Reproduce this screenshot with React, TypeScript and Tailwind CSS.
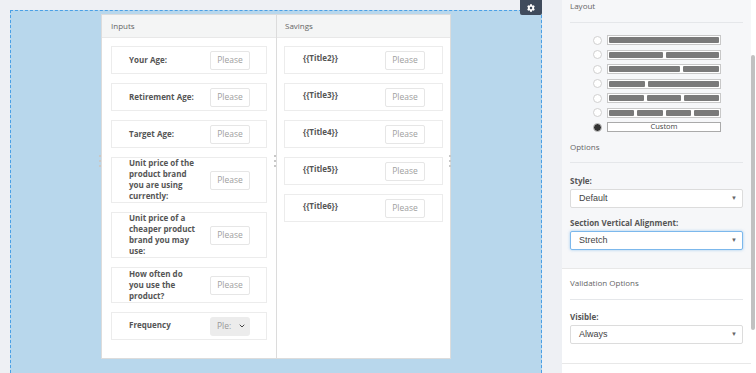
import { FaCog } from 'react-icons/fa';
import { ChevronDown } from 'lucide-react';

const inputRows = [
  { label: 'Your Age:', h: 'h-[28px]' },
  { label: 'Retirement Age:', h: 'h-[28px]' },
  { label: 'Target Age:', h: 'h-[28px]' },
  { label: 'Unit price of the product brand you are using currently:', h: 'h-[46px]' },
  { label: 'Unit price of a cheaper product brand you may use:', h: 'h-[46px]' },
  { label: 'How often do you use the product?', h: 'h-[36px]' },
];

const savingsRows = ['{{Title2}}', '{{Title3}}', '{{Title4}}', '{{Title5}}', '{{Title6}}'];

const layouts = [
  ['flex-1'],
  ['flex-1', 'flex-1'],
  ['flex-[2]', 'flex-1'],
  ['flex-1', 'flex-[2]'],
  ['flex-1', 'flex-1', 'flex-1'],
  ['flex-1', 'flex-1', 'flex-1', 'flex-1'],
];

function PleaseInput() {
  return (
    <div className="w-[40px] h-[19px] shrink-0 border border-[#e6e6e6] rounded-[2px] bg-white flex items-center justify-center text-[8.5px] text-[#a0a0a0]">
      Please
    </div>
  );
}

function Handle() {
  return (
    <div className="flex flex-col gap-[3px]">
      <span className="w-[2px] h-[2px] bg-[#c8c8c8]" />
      <span className="w-[2px] h-[2px] bg-[#c8c8c8]" />
      <span className="w-[2px] h-[2px] bg-[#c8c8c8]" />
    </div>
  );
}

function Select({ value, focused }: { value: string; focused?: boolean }) {
  return (
    <div
      className={
        'h-[19px] bg-white rounded-[2px] flex items-center justify-between pl-[8px] pr-[5px] text-[9px] text-[#444] font-["Liberation_Sans",sans-serif] ' +
        (focused ? 'border border-[#7cb8ec] shadow-[0_0_3px_rgba(102,175,233,0.6)]' : 'border border-[#dcdcdc]')
      }
    >
      <span>{value}</span>
      <span className="text-[6px] text-[#666]">▼</span>
    </div>
  );
}

export default function App() {
  return (
    <div className="w-[756px] h-[373px] overflow-hidden bg-[#eef0f4] flex font-['Open_Sans',sans-serif]">
      {/* canvas */}
      <div className="w-[542px] h-full pl-[10px] pt-[10px] relative shrink-0">
        <div className="h-full border border-dashed border-[#4aa0e6] border-b-0 bg-[#b8d7ec] pl-[90px] pt-[3px]">
          <div className="relative w-[350px] h-[345px] bg-white border border-[#dcdcdc] flex">
            <div className="w-[175px] border-r border-[#dcdcdc] flex flex-col">
              <div className="h-[23px] bg-[#f4f5f5] border-b border-[#e8e8e8] pl-[9px] flex items-center text-[8px] text-[#666]">
                Inputs
              </div>
              <div className="flex flex-col gap-[9px] px-[9px] pt-[8px]">
                {inputRows.map((r) => (
                  <div key={r.label} className={`${r.h} border border-[#ececec] flex items-center justify-between pl-[17px] pr-[16px]`}>
                    <span className="w-[68px] text-[8px] leading-[11px] font-bold text-[#555] pb-[2px]">{r.label}</span>
                    <PleaseInput />
                  </div>
                ))}
                <div className="h-[28px] border border-[#ececec] flex items-center justify-between pl-[17px] pr-[16px]">
                  <span className="text-[8px] leading-[11px] font-bold text-[#555] pb-[4px]">Frequency</span>
                  <div className="w-[40px] h-[19px] bg-[#ececec] rounded-[3px] flex items-center justify-between pl-[7px] pr-[4px] text-[8.5px] text-[#999]">
                    <span className="w-[17px] overflow-hidden whitespace-nowrap">Ple:</span>
                    <ChevronDown className="w-[8px] h-[8px] text-[#444]" strokeWidth={3} />
                  </div>
                </div>
              </div>
            </div>
            <div className="flex-1 flex flex-col">
              <div className="h-[23px] bg-[#f4f5f5] border-b border-[#e8e8e8] pl-[8px] flex items-center text-[8px] text-[#666]">
                Savings
              </div>
              <div className="flex flex-col gap-[9px] px-[7px] pt-[8px]">
                {savingsRows.map((t) => (
                  <div key={t} className="h-[28px] border border-[#ececec] flex items-center justify-between pl-[18px] pr-[17px]">
                    <span className="text-[8px] font-bold text-[#555] pb-[4px]">{t}</span>
                    <PleaseInput />
                  </div>
                ))}
              </div>
            </div>
            <div className="absolute left-[-3px] top-[140px]"><Handle /></div>
            <div className="absolute left-[172px] top-[140px]"><Handle /></div>
            <div className="absolute left-[347px] top-[140px]"><Handle /></div>
          </div>
        </div>
        <div className="absolute left-[520px] top-0 w-[22px] h-[15px] bg-[#3f4b5c] rounded-b-[2px] flex items-center justify-center">
          <FaCog className="w-[8px] h-[8px] text-white" />
        </div>
      </div>

      <div className="w-[20px] shrink-0" />

      {/* right panel */}
      <div className="w-[194px] h-full flex bg-white">
        <div className="flex-1 flex flex-col">
          <div className="bg-[#f6f7f9] px-[8px] h-[268px] shrink-0">
            <div className="h-[23px] border-b border-[#e5e7ea] text-[8px] leading-[11px] text-[#666]">Layout</div>
            <div className="flex flex-col gap-[4.5px] pt-[12px] pl-[23px]">
              {layouts.map((segs, i) => (
                <div key={i} className="flex items-center gap-[5px]">
                  <span className="w-[9px] h-[9px] rounded-full bg-white border border-[#d0d0d0]" />
                  <div className="w-[114px] h-[10px] border border-[#c8c8c8] bg-white p-[1px] flex gap-[3px]">
                    {segs.map((s, j) => (
                      <span key={j} className={`${s} bg-[#7a7a7a] rounded-[1px]`} />
                    ))}
                  </div>
                </div>
              ))}
              <div className="flex items-center gap-[5px]">
                <span className="w-[9px] h-[9px] rounded-full bg-[#333] border border-[#ccc]" />
                <div className="w-[114px] h-[10px] border border-[#aaa] bg-white flex items-center justify-center text-[7.5px] leading-none text-[#444]">
                  Custom
                </div>
              </div>
            </div>
            <div className="mt-[9px] h-[22px] border-b border-[#e5e7ea] text-[8px] leading-[11px] text-[#666]">Options</div>
            <div className="mt-[12px] text-[8px] leading-[11px] font-bold text-[#555]">Style:</div>
            <div className="mt-[3px]"><Select value="Default" /></div>
            <div className="mt-[9px] text-[8px] leading-[11px] font-bold text-[#555]">Section Vertical Alignment:</div>
            <div className="mt-[3px]"><Select value="Stretch" focused /></div>
          </div>
          <div className="border-t border-[#e8e8e8] px-[8px] h-[95px] shrink-0">
            <div className="pt-[8px] h-[31px] border-b border-[#e5e7ea] text-[8px] leading-[11px] text-[#666]">Validation Options</div>
            <div className="mt-[11px] text-[8px] leading-[11px] font-bold text-[#555]">Visible:</div>
            <div className="mt-[3px]"><Select value="Always" /></div>
          </div>
          <div className="border-t border-[#e8e8e8] flex-1" />
        </div>
        <div className="w-[5px] bg-white">
          <div className="mt-[55px] h-[275px] w-[4px] bg-[#c1c1c1] rounded-full" />
        </div>
      </div>
    </div>
  );
}
